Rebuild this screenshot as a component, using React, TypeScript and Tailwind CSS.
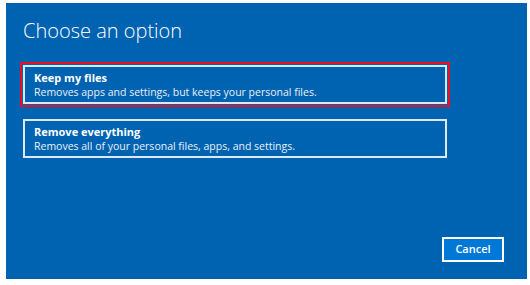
import React from 'react';

const Option: React.FC<{ title: string; desc: string; focused?: boolean }> = ({ title, desc, focused }) => (
  <div className={`w-[430px] p-[1px] border-2 ${focused ? 'border-[#e81123]' : 'border-transparent'}`}>
    <div className="h-[39px] border-2 border-[#dce9f5] px-[9px] pt-[4px] leading-[14px] text-white">
      <div className="text-[11px] font-bold">{title}</div>
      <div className="text-[10.5px] text-[#e8f0f8]">{desc}</div>
    </div>
  </div>
);

const App: React.FC = () => {
  return (
    <div className="w-[530px] h-[285px] bg-white pt-[3px] pl-[6px]" style={{ fontFamily: '"Open Sans", "Noto Sans", sans-serif' }}>
      <div className="w-[521px] h-[276px] bg-[#0063b1] flex flex-col">
        <h1 className="pl-[17px] pt-[14px] text-[20px] font-light leading-[28px] text-white">Choose an option</h1>
        <div className="mt-[17px] ml-[14px] flex flex-col gap-[9px]">
          <Option title="Keep my files" desc="Removes apps and settings, but keeps your personal files." focused />
          <Option title="Remove everything" desc="Removes all of your personal files, apps, and settings." />
        </div>
        <div className="mt-auto mb-[17px] mr-[23px] flex justify-end">
          <button className="w-[62px] h-[25px] border-2 border-white bg-[#0078d7] text-[11px] font-semibold text-white">
            Cancel
          </button>
        </div>
      </div>
    </div>
  );
};

export default App;
